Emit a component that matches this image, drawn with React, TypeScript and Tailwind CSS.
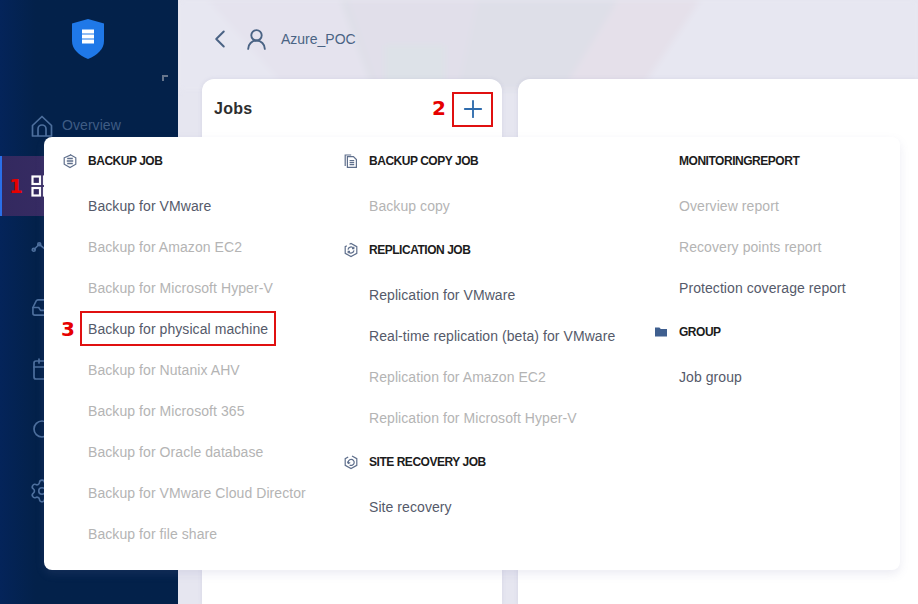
import { Calendar, ChevronLeft, Inbox, Plus, Search, Settings, UserRound } from "lucide-react";
import type { ReactNode } from "react";

type MenuItem = { label: string; enabled?: boolean; mark?: string };
type MenuGroup = { title: string; icon?: ReactNode; items: MenuItem[] };

function BackupIcon() {
  return (
    <svg viewBox="0 0 16 16" className="size-4 text-[#5f6f8c]" fill="none" stroke="currentColor" strokeWidth="1.2">
      <path d="M8 1.500 13.800 4.800v6.400L8 14.500 2.200 11.200V4.800L9 1.900" />
      <path d="M5.200 5.600h5.600M4.800 8h6.400M5.200 10.400h5.600" strokeWidth="1.500" />
    </svg>
  );
}

function CopyIcon() {
  return (
    <svg viewBox="0 0 16 16" className="size-4 text-[#5f6f8c]" fill="none" stroke="currentColor" strokeWidth="1.2">
      <path d="M2.200 13V2h6" />
      <path d="M4.400 14.400V3.600h6l3 3v7.800z" />
      <path d="M6.600 7.600h4.600M6.600 9.600h4.600M6.600 11.600h4.600" strokeWidth="1.300" />
    </svg>
  );
}

function ReplicationIcon() {
  return (
    <svg viewBox="0 0 16 16" className="size-4 text-[#5f6f8c]" fill="none" stroke="currentColor" strokeWidth="1.2">
      <path d="M6.500 2.200 8 1.400l5.800 3.300v6.600L8 14.600l-5.800-3.300V4.700l1.600-.9" />
      <path d="M5 7.600a3 3 0 0 1 5.400-1.400M11 8.400a3 3 0 0 1-5.400 1.400" />
      <path d="M10.800 4.800v1.800H9M5.200 11.200V9.400H7" />
    </svg>
  );
}

function RecoveryIcon() {
  return (
    <svg viewBox="0 0 16 16" className="size-4 text-[#5f6f8c]" fill="none" stroke="currentColor" strokeWidth="1.2">
      <path d="M9 1.900 13.800 4.700v6.600L8 14.600l-5.800-3.300V4.700l3-1.700" />
      <path d="M5.400 9.400a3 3 0 1 1 1.200 1.500" />
      <path d="M4.400 7.600l1 1.900 1.800-1" />
    </svg>
  );
}

function FolderIcon() {
  return (
    <svg viewBox="0 0 16 16" className="size-4 text-[#3f5f8f]" fill="currentColor">
      <path d="M2 3.500h4.400l1.400 1.600H14v7.400H2z" />
    </svg>
  );
}

function StatsIcon() {
  return (
    <svg viewBox="0 0 24 24" className="size-[22px]" fill="none" stroke="currentColor" strokeWidth="1.8">
      <path d="M3 15 9 9l6 5 6-7" />
      <circle cx="3" cy="15" r="1.600" />
      <circle cx="9" cy="9" r="1.600" />
    </svg>
  );
}

function HomeIcon() {
  return (
    <svg viewBox="0 0 22 22" className="size-[22px]" fill="none" stroke="currentColor" strokeWidth="1.7">
      <path d="M1.500 10.500 11 1.500l9.500 9V21h-19z" strokeLinejoin="round" />
      <path d="M7 21v-7a4 4 0 0 1 8 0v7" />
    </svg>
  );
}

function GridIcon() {
  return (
    <svg viewBox="0 0 22 22" className="size-[22px]" fill="none" stroke="currentColor" strokeWidth="2.200">
      <rect x="1.500" y="1.500" width="7.500" height="7.500" />
      <rect x="13" y="1.500" width="7.500" height="7.500" />
      <rect x="1.500" y="13" width="7.500" height="7.500" />
      <rect x="13" y="13" width="7.500" height="7.500" />
    </svg>
  );
}

const columns: MenuGroup[][] = [
  [
    {
      title: "BACKUP JOB",
      icon: <BackupIcon />,
      items: [
        { label: "Backup for VMware", enabled: true },
        { label: "Backup for Amazon EC2" },
        { label: "Backup for Microsoft Hyper-V" },
        { label: "Backup for physical machine", enabled: true, mark: "3" },
        { label: "Backup for Nutanix AHV" },
        { label: "Backup for Microsoft 365" },
        { label: "Backup for Oracle database" },
        { label: "Backup for VMware Cloud Director" },
        { label: "Backup for file share" },
      ],
    },
  ],
  [
    { title: "BACKUP COPY JOB", icon: <CopyIcon />, items: [{ label: "Backup copy" }] },
    {
      title: "REPLICATION JOB",
      icon: <ReplicationIcon />,
      items: [
        { label: "Replication for VMware", enabled: true },
        { label: "Real-time replication (beta) for VMware", enabled: true },
        { label: "Replication for Amazon EC2" },
        { label: "Replication for Microsoft Hyper-V" },
      ],
    },
    { title: "SITE RECOVERY JOB", icon: <RecoveryIcon />, items: [{ label: "Site recovery", enabled: true }] },
  ],
  [
    {
      title: "MONITORINGREPORT",
      items: [
        { label: "Overview report" },
        { label: "Recovery points report" },
        { label: "Protection coverage report", enabled: true },
      ],
    },
    { title: "GROUP", icon: <FolderIcon />, items: [{ label: "Job group", enabled: true }] },
  ],
];

const navIcons = [
  <StatsIcon />,
  <Inbox className="size-[23px]" strokeWidth={1.7} />,
  <Calendar className="size-[24px]" strokeWidth={1.7} />,
  <Search className="size-[24px]" strokeWidth={1.7} />,
  <Settings className="-ml-[2px] size-[26px]" strokeWidth={1.5} />,
];

function Sidebar() {
  return (
    <aside className="flex h-full w-[178px] shrink-0 flex-col bg-gradient-to-r from-[#04245a] to-[#03214a] to-[20%] text-[#4d6f9d]">
      <div className="flex h-[95px] flex-col">
        <div className="flex justify-center pr-[2px] pt-[19px]">
          <svg viewBox="0 0 32 40" className="h-10 w-8">
            <path d="M16 0 32 4.500V22c0 8-6.600 14-16 18C6.600 36 0 30 0 22V4.500z" fill="#1f78e8" />
            <path d="M10 10.500h12v4H10zM10 15.500h12v4H10zM10 20.500h12v4H10z" fill="#fff" />
          </svg>
        </div>
        <div className="ml-[162px] mt-[16px] size-[6px] border-l-2 border-t-2 border-[#66758c]" />
      </div>
      <div className="flex h-[61px] items-center gap-[9px] pl-[31px]">
        <HomeIcon />
        <span className="text-[14px] tracking-[0.07px] text-[#3f5c84]">Overview</span>
      </div>
      <div className="relative flex h-[60px] items-center border-l-2 border-[#2a6fe8] bg-gradient-to-r from-[#33295f] to-[#40326d] pl-[29px] text-white">
        <span className="absolute left-[7px] font-['DejaVu_Sans',sans-serif] text-[20px] font-bold text-[#e60000]">1</span>
        <GridIcon />
      </div>
      {navIcons.map((icon, i) => (
        <div key={i} className="flex h-[61px] items-center pl-[31px]">
          {icon}
        </div>
      ))}
    </aside>
  );
}

function PopoverMenu() {
  return (
    <div className="absolute left-[44px] top-[137px] flex h-[433px] w-[856px] rounded-lg bg-white pt-px shadow-[0_4px_10px_rgba(120,120,170,0.14)]">
      {columns.map((groups, c) => (
        <div key={c} className={c === 0 ? "w-[281px]" : c === 1 ? "w-[310px]" : "flex-1"}>
          {groups.map((g) => (
            <div key={g.title}>
              <div className="flex h-[48px] items-center pb-[2px]">
                <span className="flex w-[44px] shrink-0 pl-[18px]">{g.icon}</span>
                <span className="text-[12px] font-bold tracking-[-0.47px] text-[#1c1c1c]">{g.title}</span>
              </div>
              {g.items.map((item) => (
                <div
                  key={item.label}
                  className={`relative h-[41px] pl-[44px] text-[14px] leading-[41px] tracking-[0.07px] ${item.enabled ? "text-[#555a6a]" : "text-[#b4b4b4]"}`}
                >
                  {item.label}
                  {item.mark && (
                    <>
                      <span className="absolute left-[36px] top-[2px] h-[35px] w-[196px] border-2 border-[#e01010]" />
                      <span className="absolute left-[17px] top-0 font-['DejaVu_Sans',sans-serif] text-[20px] font-bold text-[#e60000]">{item.mark}</span>
                    </>
                  )}
                </div>
              ))}
            </div>
          ))}
        </div>
      ))}
    </div>
  );
}

export default function App() {
  return (
    <div className="relative flex h-[604px] w-[918px] overflow-hidden bg-[#e6e6f0] font-['Liberation_Sans',Arial,sans-serif]">
      <Sidebar />
      <main className="relative flex min-w-0 flex-1 flex-col overflow-hidden">
        {/* faint wallpaper shapes behind the top bar */}
        <svg viewBox="0 0 740 90" className="absolute left-0 top-0 h-[90px] w-[740px] blur-[3px]">
          <path d="M-10-10H750V100H-10z" fill="#e7e7f1" />
          <path d="M162 0H522L462 90H195z" fill="#dedfe8" />
          <path d="M30 0H162L195 90H110z" fill="#e5e3ee" />
          <path d="M170 0H300L280 90H200z" fill="#e1dfea" />
          <path d="M207 45H267V90H207z" fill="#dde2e8" />
          <path d="M440 0H522L462 90H385z" fill="#e5e0ea" />
        </svg>
        <header className="relative flex h-[79px] shrink-0 items-center pb-px pl-[27px] text-[#4a6384]">
          <ChevronLeft className="size-[30px]" strokeWidth={1.6} />
          <UserRound className="ml-[9px] size-[25px]" strokeWidth={1.8} />
          <span className="ml-[12px] text-[14px]">Azure_POC</span>
        </header>
        <div className="relative flex min-h-0 flex-1 gap-4 pl-6">
          <section className="w-[300px] rounded-t-xl bg-white shadow-[0_0_4px_rgba(120,120,170,0.15)]">
            <div className="flex h-[60px] items-center pl-3 pr-[9px]">
              <h2 className="flex-1 text-[16px] font-bold tracking-[0.3px] text-[#2e2e2e]">Jobs</h2>
              <span className="mr-[7px] -translate-y-px translate-x-px font-['DejaVu_Sans',sans-serif] text-[20px] font-bold text-[#e60000]">2</span>
              <button className="flex h-[35px] w-[41px] items-center justify-center border-2 border-[#e01010] text-[#2f6cad]">
                <Plus className="size-[28px]" strokeWidth={1.6} />
              </button>
            </div>
          </section>
          <section className="flex-1 rounded-tl-xl bg-white shadow-[0_0_4px_rgba(120,120,170,0.15)]" />
        </div>
      </main>
      <PopoverMenu />
    </div>
  );
}
